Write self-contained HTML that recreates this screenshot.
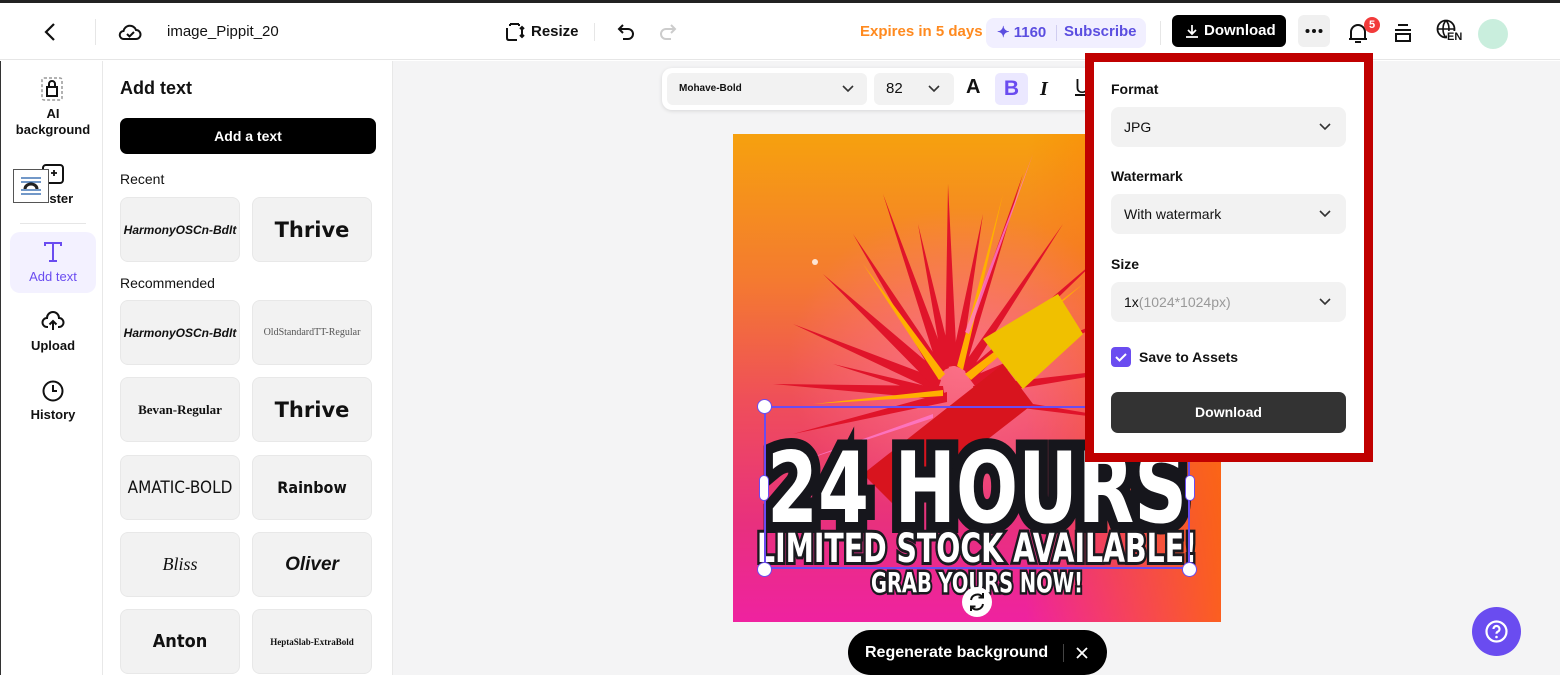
<!DOCTYPE html>
<html><head><meta charset="utf-8"><style>
*{box-sizing:border-box;margin:0;padding:0}
body{width:1560px;height:675px;overflow:hidden;font-family:"Liberation Sans",sans-serif;background:#fff;position:relative;color:#111}
.abs{position:absolute}
.topbar{left:0;top:0;width:1560px;height:3px;background:#222}
.header{left:0;top:3px;width:1560px;height:57px;border-bottom:1px solid #e6e6e6;background:#fff}
.side{left:0;top:61px;width:103px;height:614px;border-right:1px solid #e8e8e8;border-left:1px solid #333}
.panel{left:103px;top:61px;width:290px;height:614px;border-right:1px solid #e8e8e8;background:#fff}
.canvas{left:393px;top:61px;width:1167px;height:614px;background:#f4f4f5}
.navitem{position:absolute;width:86px;left:9px;text-align:center;font-size:13px;font-weight:bold;color:#111}
.card{position:absolute;width:120px;height:65px;background:#f2f2f2;border:1px solid #e8e8e8;border-radius:8px;display:flex;align-items:center;justify-content:center;font-size:13px;color:#111}
.sel{position:absolute;background:#f2f2f2;border-radius:8px;height:40px;left:1111px;width:235px;font-size:14px;display:flex;align-items:center;padding-left:13px}
.sel svg{position:absolute;right:14px}
.lbl{position:absolute;left:1111px;font-size:14px;font-weight:bold}
</style></head><body>
<div class="abs topbar"></div>
<div class="abs header">
 <svg class="abs" style="left:42px;top:18px" width="16" height="22" viewBox="0 0 16 22"><path d="M12 3L4 11l8 8" fill="none" stroke="#111" stroke-width="2.2"/></svg>
 <div class="abs" style="left:95px;top:16px;width:1px;height:26px;background:#e6e6e6"></div>
 <svg class="abs" style="left:118px;top:18px" width="24" height="22" viewBox="0 0 24 22"><path d="M6 18h12a4.5 4.5 0 0 0 0-9 6.5 6.5 0 0 0-12.5 1A4 4 0 0 0 6 18z" fill="none" stroke="#111" stroke-width="2"/><path d="M9 13l2.5 2.5L16 11" fill="none" stroke="#111" stroke-width="2"/></svg>
 <div class="abs" style="left:167px;top:20px;font-size:15px">image_Pippit_20</div>
 <svg class="abs" style="left:505px;top:19px" width="20" height="20" viewBox="0 0 20 20"><path d="M2 6v10q0 2 2 2h8M5 2h9M5 2v2M14 2v2M17 5v10M15 7l2-2 2 2M15 13l2 2 2-2" fill="none" stroke="#111" stroke-width="2"/></svg>
 <div class="abs" style="left:531px;top:20px;font-size:15px;font-weight:bold">Resize</div>
 <div class="abs" style="left:594px;top:20px;width:1px;height:18px;background:#e6e6e6"></div>
 <svg class="abs" style="left:617px;top:19px" width="20" height="20" viewBox="0 0 20 20"><path d="M6 3L2 7l4 4M2 7h9a5 5 0 0 1 0 10H6" fill="none" stroke="#111" stroke-width="2"/></svg>
 <svg class="abs" style="left:657px;top:19px" width="20" height="20" viewBox="0 0 20 20"><path d="M14 3l4 4-4 4M18 7H9a5 5 0 0 0 0 10h5" fill="none" stroke="#ccc" stroke-width="2"/></svg>
 <div class="abs" style="left:860px;top:20px;font-size:15px;font-weight:bold;color:#ff8a1f">Expires in 5 days</div>
 <div class="abs" style="left:986px;top:15px;width:160px;height:30px;background:#f1efff;border-radius:8px"></div>
 <div class="abs" style="left:997px;top:20px;font-size:15px;font-weight:bold;color:#5b4ee0">✦ 1160</div>
 <div class="abs" style="left:1056px;top:22px;width:1px;height:16px;background:#d0cdf0"></div>
 <div class="abs" style="left:1064px;top:20px;font-size:15px;font-weight:bold;color:#5b4ee0">Subscribe</div>
 <div class="abs" style="left:1160px;top:18px;width:1px;height:24px;background:#e6e6e6"></div>
 <div class="abs" style="left:1172px;top:12px;width:114px;height:32px;background:#000;border-radius:6px;color:#fff;font-size:15px;font-weight:bold;padding:7px 0 0 32px">Download</div>
 <svg class="abs" style="left:1185px;top:21px" width="14" height="14" viewBox="0 0 14 14"><path d="M7 1v9M3 6l4 4 4-4M1 13h12" fill="none" stroke="#fff" stroke-width="1.7"/></svg>
 <div class="abs" style="left:1298px;top:12px;width:32px;height:32px;background:#f0f0f0;border-radius:6px"><svg width="32" height="32" viewBox="0 0 32 32"><circle cx="9.5" cy="16" r="2" fill="#111"/><circle cx="16" cy="16" r="2" fill="#111"/><circle cx="22.5" cy="16" r="2" fill="#111"/></svg></div>
 <svg class="abs" style="left:1347px;top:18px" width="22" height="24" viewBox="0 0 22 24"><path d="M4 18V11a7 7 0 0 1 14 0v7M2 18h18M8 21h6" fill="none" stroke="#111" stroke-width="2"/></svg>
 <div class="abs" style="left:1364px;top:14px;width:16px;height:16px;background:#f23b3b;border-radius:50%;color:#fff;font-size:11px;font-weight:bold;text-align:center;line-height:16px">5</div>
 <svg class="abs" style="left:1393px;top:19px" width="20" height="22" viewBox="0 0 20 22"><path d="M5 3h10M2 8h16M3 12h14v7H3z" fill="none" stroke="#111" stroke-width="2"/></svg>
 <svg class="abs" style="left:1436px;top:16px" width="22" height="22" viewBox="0 0 22 22"><circle cx="10" cy="10" r="8.5" fill="none" stroke="#111" stroke-width="1.8"/><path d="M1.5 10h17M10 1.5c-4 4-4 13 0 17M10 1.5c4 4 4 13 0 17" fill="none" stroke="#111" stroke-width="1.6"/></svg>
 <div class="abs" style="left:1447px;top:28px;font-size:11px;font-weight:bold;background:#fff">EN</div>
 <div class="abs" style="left:1478px;top:16px;width:30px;height:30px;border-radius:50%;background:#c9eedd"></div>
</div>

<div class="abs side">
 <svg class="abs" style="left:40px;top:16px" width="22" height="24" viewBox="0 0 22 24"><rect x="1" y="1" width="20" height="22" rx="2" fill="none" stroke="#999" stroke-width="1.5" stroke-dasharray="3 2"/><path d="M6 10h10v9H6zM8 10V7a3 3 0 0 1 6 0v3" fill="none" stroke="#111" stroke-width="2"/></svg>
 <div class="navitem" style="top:45px;line-height:16px">AI<br>background</div>
 <svg class="abs" style="left:40px;top:102px" width="24" height="22" viewBox="0 0 24 22"><rect x="2" y="2" width="20" height="18" rx="3" fill="none" stroke="#111" stroke-width="2"/><path d="M13 7v6M10 10h6" stroke="#111" stroke-width="1.8"/></svg>
 <div class="navitem" style="top:130px">Poster</div>
 <div class="abs" style="left:-5px;top:101px;width:10px;height:48px;border-left:2px solid #555;border-radius:4px"></div>
 <div class="abs" style="left:12px;top:108px;width:36px;height:34px;background:#fff;border:1px solid #555"><svg width="34" height="32" viewBox="0 0 34 32"><path d="M7 8h20M7 12h20M7 20h20M7 24h20" stroke="#1d5ba8" stroke-width="1.3"/><path d="M11 19a6 5 0 0 1 12 0" fill="none" stroke="#222" stroke-width="3"/></svg></div>
 <div class="abs" style="left:19px;top:162px;width:66px;height:1px;background:#e6e6e6"></div>
 <div class="abs" style="left:9px;top:171px;width:86px;height:61px;background:#f3f1ff;border-radius:10px"></div>
 <svg class="abs" style="left:42px;top:180px" width="20" height="22" viewBox="0 0 20 22"><path d="M2 5V2h16v3M10 2v18M6 20h8" fill="none" stroke="#6a4cf0" stroke-width="2"/></svg>
 <div class="navitem" style="top:208px;color:#6a4cf0;font-weight:normal">Add text</div>
 <svg class="abs" style="left:40px;top:249px" width="24" height="22" viewBox="0 0 24 22"><path d="M7 17H6a4.5 4.5 0 0 1 0-9 6 6 0 0 1 12 0 4.5 4.5 0 0 1 0 9h-1M12 20v-9M8.5 14.5L12 11l3.5 3.5" fill="none" stroke="#111" stroke-width="2"/></svg>
 <div class="navitem" style="top:277px">Upload</div>
 <svg class="abs" style="left:40px;top:318px" width="24" height="24" viewBox="0 0 24 24"><circle cx="12" cy="12" r="9.5" fill="none" stroke="#111" stroke-width="2"/><path d="M12 6v6h4" fill="none" stroke="#111" stroke-width="2"/></svg>
 <div class="navitem" style="top:346px">History</div>
</div>

<div class="abs panel">
 <div class="abs" style="left:17px;top:17px;font-size:18px;font-weight:bold">Add text</div>
 <div class="abs" style="left:17px;top:57px;width:256px;height:36px;background:#000;border-radius:7px;color:#fff;font-size:14px;font-weight:bold;text-align:center;line-height:36px">Add a text</div>
 <div class="abs" style="left:17px;top:110px;font-size:14px">Recent</div>
 <div class="card" style="left:17px;top:136px;font-style:italic;font-weight:bold;font-size:12px">HarmonyOSCn-BdIt</div>
 <div class="card" style="left:149px;top:136px;font-size:21px;font-weight:bold;font-family:'DejaVu Sans',sans-serif">Thrive</div>
 <div class="abs" style="left:17px;top:214px;font-size:14px">Recommended</div>
 <div class="card" style="left:17px;top:239px;font-style:italic;font-weight:bold;font-size:12px">HarmonyOSCn-BdIt</div>
 <div class="card" style="left:149px;top:239px;font-family:'Liberation Serif',serif;font-size:10px;color:#555">OldStandardTT-Regular</div>
 <div class="card" style="left:17px;top:316px;font-family:'Liberation Serif',serif;font-weight:bold;font-size:13px">Bevan-Regular</div>
 <div class="card" style="left:149px;top:316px;font-size:21px;font-weight:bold;font-family:'DejaVu Sans',sans-serif">Thrive</div>
 <div class="card" style="left:17px;top:394px;font-size:17px;font-family:'DejaVu Sans Condensed',sans-serif">AMATIC-BOLD</div>
 <div class="card" style="left:149px;top:394px;font-size:16px;font-weight:bold;font-family:'DejaVu Sans Condensed',sans-serif">Rainbow</div>
 <div class="card" style="left:17px;top:471px;font-size:18px;font-style:italic;font-family:'Liberation Serif',serif">Bliss</div>
 <div class="card" style="left:149px;top:471px;font-size:19px;font-weight:bold;font-style:italic">Oliver</div>
 <div class="card" style="left:17px;top:548px;font-size:18px;font-weight:bold;font-family:'DejaVu Sans Condensed',sans-serif">Anton</div>
 <div class="card" style="left:149px;top:548px;font-size:9px;font-weight:bold;font-family:'Liberation Serif',serif">HeptaSlab-ExtraBold</div>
</div>

<div class="abs canvas"></div>
<div class="abs" style="left:662px;top:68px;width:440px;height:42px;background:#fff;border-radius:10px;box-shadow:0 1px 4px rgba(0,0,0,.12)"></div>
<div class="abs" style="left:667px;top:73px;width:200px;height:32px;background:#f2f2f2;border-radius:6px;font-size:10px;font-weight:bold;padding:10px 0 0 12px">Mohave-Bold</div>
<svg class="abs" style="left:841px;top:84px" width="14" height="10" viewBox="0 0 14 10"><path d="M2 2l5 5 5-5" fill="none" stroke="#333" stroke-width="1.6"/></svg>
<div class="abs" style="left:874px;top:73px;width:80px;height:32px;background:#f2f2f2;border-radius:6px;font-size:15px;padding:7px 0 0 12px">82</div>
<svg class="abs" style="left:927px;top:84px" width="14" height="10" viewBox="0 0 14 10"><path d="M2 2l5 5 5-5" fill="none" stroke="#333" stroke-width="1.6"/></svg>
<div class="abs" style="left:966px;top:76px;font-size:20px;font-weight:bold">A</div>
<div class="abs" style="left:995px;top:73px;width:33px;height:32px;background:#ebe8ff;border-radius:5px;font-size:21px;font-weight:bold;color:#6a4cf0;text-align:center;line-height:32px">B</div>
<div class="abs" style="left:1040px;top:78px;font-size:20px;font-weight:bold;font-style:italic;font-family:'Liberation Serif',serif">I</div>
<div class="abs" style="left:1075px;top:76px;font-size:20px;text-decoration:underline">U</div>

<!-- poster -->
<div class="abs" style="left:733px;top:134px;width:488px;height:488px;overflow:hidden;background:linear-gradient(180deg,#f6a10e 0%,#f47a30 30%,#ef4e5a 55%,#e8307e 80%,#ef22a0 100%)">
 <div class="abs" style="left:0;top:0;width:488px;height:488px;background:linear-gradient(90deg,rgba(255,255,255,0) 60%,rgba(255,110,0,.8) 100%)"></div>
 <div class="abs" style="left:40px;top:60px;width:380px;height:340px;background:radial-gradient(ellipse at center,rgba(255,120,160,.7) 0%,rgba(255,120,160,0) 65%)"></div>
 <svg class="abs" style="left:0;top:0" width="488" height="488" viewBox="0 0 488 488">
  <g fill="#e0142a">
   <polygon points="40,250 210,252 212,266"/><polygon points="60,190 208,246 204,258"/><polygon points="90,140 208,240 200,252"/><polygon points="120,100 212,236 202,244"/><polygon points="150,60 216,234 206,238"/><polygon points="185,90 220,232 210,234"/><polygon points="215,50 224,232 212,232"/><polygon points="250,80 228,232 218,230"/><polygon points="290,40 232,236 222,232"/><polygon points="330,90 236,240 228,234"/><polygon points="370,120 240,246 232,238"/><polygon points="410,170 242,252 236,244"/><polygon points="430,230 242,262 240,252"/><polygon points="420,290 240,268 240,260"/><polygon points="60,300 214,268 214,258"/><polygon points="100,230 210,256 206,264"/>
  </g>
  <g fill="#ffb000"><polygon points="130,130 212,240 206,246"/><polygon points="270,60 230,236 224,232"/><polygon points="350,150 238,246 232,240"/><polygon points="80,270 210,262 210,256"/></g>
  <g fill="#ff7ad0" opacity=".8"><polygon points="300,20 236,200 232,198"/><polygon points="60,330 200,280 200,284"/></g>
  <polygon points="130,340 270,230 300,270 165,375" fill="#d8141e"/>
  <polygon points="250,205 325,160 350,200 290,255" fill="#f0c000"/>
  <circle cx="82" cy="128" r="3" fill="#fff" opacity=".8"/>
 </svg>
 <svg class="abs" style="left:0;top:270px" width="488" height="218" viewBox="0 0 488 218">
  <text x="244" y="118" text-anchor="middle" font-family="'DejaVu Sans Condensed','Liberation Sans Narrow',sans-serif" font-weight="bold" font-size="98" fill="#fff" stroke="#16161c" stroke-width="22" paint-order="stroke" textLength="420" lengthAdjust="spacingAndGlyphs">24 HOURS</text>
  <text x="244" y="158" text-anchor="middle" font-family="'DejaVu Sans Condensed',sans-serif" font-weight="bold" font-size="40" fill="#fff" stroke="#1a1a1f" stroke-width="6" paint-order="stroke" textLength="440" lengthAdjust="spacingAndGlyphs">LIMITED STOCK AVAILABLE!</text>
  <text x="244" y="188" text-anchor="middle" font-family="'DejaVu Sans Condensed',sans-serif" font-weight="bold" font-size="28" fill="#fff" stroke="#1a1a1f" stroke-width="5" paint-order="stroke" textLength="212" lengthAdjust="spacingAndGlyphs">GRAB YOURS NOW!</text>
 </svg>
</div>
<div class="abs" style="left:764px;top:406px;width:426px;height:163px;border:2px solid #6a4cf0"></div>
<div class="abs" style="left:757px;top:399px;width:15px;height:15px;border-radius:50%;background:#fff;border:1.5px solid #6a4cf0"></div>
<div class="abs" style="left:757px;top:562px;width:15px;height:15px;border-radius:50%;background:#fff;border:1.5px solid #6a4cf0"></div>
<div class="abs" style="left:1182px;top:562px;width:15px;height:15px;border-radius:50%;background:#fff;border:1.5px solid #6a4cf0"></div>
<div class="abs" style="left:759px;top:475px;width:10px;height:26px;border-radius:5px;background:#fff;border:1.5px solid #6a4cf0"></div>
<div class="abs" style="left:1185px;top:475px;width:10px;height:26px;border-radius:5px;background:#fff;border:1.5px solid #6a4cf0"></div>
<div class="abs" style="left:962px;top:587px;width:30px;height:30px;border-radius:50%;background:#fff"><svg width="30" height="30" viewBox="0 0 30 30"><path d="M9 13a6.5 6.5 0 0 1 11.5-3M21 17a6.5 6.5 0 0 1-11.5 3" fill="none" stroke="#111" stroke-width="2"/><path d="M21 6v4.5h-4.5M9 24v-4.5h4.5" fill="none" stroke="#111" stroke-width="2"/></svg></div>

<div class="abs" style="left:848px;top:630px;width:259px;height:45px;background:#000;border-radius:23px"></div>
<div class="abs" style="left:865px;top:644px;font-size:16px;font-weight:bold;color:#fff">Regenerate background</div>
<div class="abs" style="left:1063px;top:644px;width:1px;height:18px;background:#444"></div>
<svg class="abs" style="left:1075px;top:646px" width="14" height="14" viewBox="0 0 14 14"><path d="M2 2l10 10M12 2L2 12" stroke="#fff" stroke-width="1.8"/></svg>

<div class="abs" style="left:1472px;top:607px;width:49px;height:49px;border-radius:50%;background:#6a4cf0"></div>
<svg class="abs" style="left:1484px;top:619px" width="25" height="25" viewBox="0 0 25 25"><circle cx="12.5" cy="12.5" r="10" fill="none" stroke="#fff" stroke-width="2.2"/><path d="M9.5 10a3 3 0 1 1 4 2.8c-.8.4-1 1-1 2" fill="none" stroke="#fff" stroke-width="2.2"/><circle cx="12.5" cy="18" r="1.3" fill="#fff"/></svg>

<!-- download popover -->
<div class="abs" style="left:1085px;top:53px;width:288px;height:409px;border:9px solid #c00000;background:#fff"></div>
<div class="lbl" style="top:81px">Format</div>
<div class="sel" style="top:107px">JPG<svg width="14" height="10" viewBox="0 0 14 10"><path d="M2 2l5 5 5-5" fill="none" stroke="#333" stroke-width="1.6"/></svg></div>
<div class="lbl" style="top:168px">Watermark</div>
<div class="sel" style="top:194px">With watermark<svg width="14" height="10" viewBox="0 0 14 10"><path d="M2 2l5 5 5-5" fill="none" stroke="#333" stroke-width="1.6"/></svg></div>
<div class="lbl" style="top:256px">Size</div>
<div class="sel" style="top:282px">1x<span style="color:#999">(1024*1024px)</span><svg width="14" height="10" viewBox="0 0 14 10"><path d="M2 2l5 5 5-5" fill="none" stroke="#333" stroke-width="1.6"/></svg></div>
<div class="abs" style="left:1111px;top:347px;width:20px;height:20px;background:#6a4cf0;border-radius:4px"><svg width="20" height="20" viewBox="0 0 20 20"><path d="M5 10l3.5 3.5L15 7" fill="none" stroke="#fff" stroke-width="2"/></svg></div>
<div class="abs" style="left:1139px;top:349px;font-size:14px;font-weight:bold">Save to Assets</div>
<div class="abs" style="left:1111px;top:392px;width:235px;height:41px;background:#333;border-radius:7px;color:#fff;font-size:14px;font-weight:bold;text-align:center;line-height:41px">Download</div>
</body></html>
